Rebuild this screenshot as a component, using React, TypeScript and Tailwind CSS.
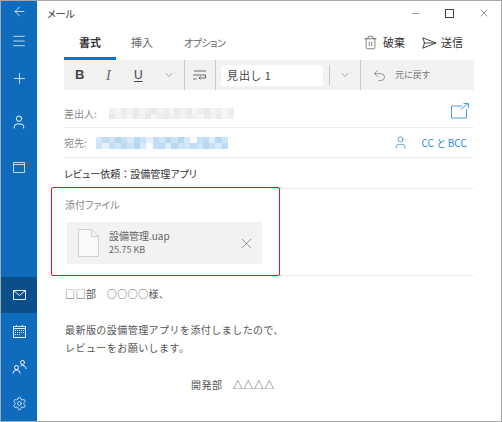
import { ChevronDown, Menu, Plus, User, Settings, Trash2, X, Minus, ArrowLeft, Undo2 } from "lucide-react";

const FONT = "font-['Noto_Sans_CJK_JP','Noto_Sans',sans-serif] [font-feature-settings:'palt']";

const FROM_BLUR = ["#f1f1f1", "#f6f6f6", "#ececec", "#f3f3f3", "#e9e9e9", "#f4f4f4", "#efefef", "#e8e8e8", "#f2f2f2", "#eeeeee", "#f6f6f6", "#ebebeb", "#f1f1f1", "#e9e9e9", "#f5f5f5", "#eeeeee", "#eaeaea", "#f3f3f3", "#efefef", "#f6f6f6", "#ededed"];
const TO_BLUR = ["#d3e7f8", "#bfdcf4", "#cfe5f7", "#b5d7f2", "#c6e0f5", "#d8eaf9", "#bbdaf3", "#cbe3f6", "#e6f1fb", "#c3def4", "#d1e6f7", "#b9d9f3", "#cde4f6", "#b5d7f2", "#d8eaf9", "#fafcfe", "#c6e0f5", "#bfdcf4", "#e0eefa", "#b9d9f3", "#cfe5f7"];

function BlurText({ colors, width, height }: { colors: string[]; width: number; height: number }) {
  // two rows of blocks, the second one shifted, like the mosaic over the address
  const shifted = [...colors.slice(7), ...colors.slice(0, 7)];
  return (
    <div className="flex flex-col" style={{ width, height }}>
      {[colors, shifted].map((row, r) => (
        <div key={r} className="flex flex-1">
          {row.map((c, i) => (
            <div key={i} className="flex-1" style={{ backgroundColor: c }} />
          ))}
        </div>
      ))}
    </div>
  );
}

function SideIcon({ children, active }: { children: React.ReactNode; active?: boolean }) {
  return (
    <div className={`flex h-[36px] w-full items-center justify-center text-white ${active ? "bg-[#0b4f8a]" : ""}`}>
      {children}
    </div>
  );
}

function Sidebar() {
  return (
    <div className="flex h-full w-[36px] shrink-0 flex-col bg-[#0f6cbd] text-white">
      <div className="flex flex-col">
        <div className="flex h-[20px] items-center justify-center">
          <ArrowLeft size={15} strokeWidth={1.2} />
        </div>
        <div className="flex h-[40px] items-center justify-center">
          <Menu size={16} strokeWidth={1.1} />
        </div>
        <div className="flex h-[34px] items-center justify-center">
          <Plus size={17} strokeWidth={1.1} />
        </div>
        <div className="flex h-[54px] items-center justify-center">
          <User size={16} strokeWidth={1.4} />
        </div>
        <div className="flex h-[36px] items-center justify-center">
          <svg width="12" height="11" viewBox="0 0 12 11" fill="none" stroke="currentColor" strokeOpacity="0.75">
            <path d="M.5.500h11v10H.5zM.5 2.500h11" />
          </svg>
        </div>
      </div>
      <div className="mt-auto flex flex-col">
        <SideIcon active>
          <svg width="13" height="10" viewBox="0 0 13 10" fill="none" stroke="currentColor" strokeOpacity="0.9">
            <path d="M.5.500h12v9H.5zM.5.500 6.500 5.500 12.500.500" />
          </svg>
        </SideIcon>
        <SideIcon>
          <svg width="13" height="13" viewBox="0 0 13 13" fill="none" stroke="currentColor" strokeOpacity="0.9">
            <rect x="0.500" y="1.500" width="12" height="11" />
            <line x1="0.500" y1="3.500" x2="12.500" y2="3.500" />
            <line x1="3.500" y1="0" x2="3.500" y2="2" />
            <line x1="9.500" y1="0" x2="9.500" y2="2" />
            <path d="M2 5.500h9M2 7.500h9M2 9.500h6" strokeDasharray="1 1" />
          </svg>
        </SideIcon>
        <SideIcon>
          <svg width="15" height="14" viewBox="0 0 15 14" fill="none" stroke="currentColor" strokeOpacity="0.95">
            <circle cx="4.500" cy="7.500" r="2" />
            <path d="M1 13.500c0-2.200 1.400-3.500 3.500-3.500S8 11.300 8 13.500" />
            <circle cx="10.500" cy="2.500" r="2" />
            <path d="M8.500 6.200c.6-.5 1.200-.7 2-.7 2.100 0 3.500 1.300 3.500 3.500" />
          </svg>
        </SideIcon>
        <SideIcon>
          <Settings size={15} strokeWidth={1.2} />
        </SideIcon>
      </div>
    </div>
  );
}

function TitleBar() {
  return (
    <div className="flex h-[26px] items-center pb-[2px] pl-[10px] text-[#333]">
      <span className="text-[10px]">メール</span>
      <div className="ml-auto flex items-center text-[#333]">
        <div className="flex w-[34px] justify-center">
          <Minus size={11} strokeWidth={1} />
        </div>
        <div className="flex w-[34px] justify-center">
          <div className="h-[9px] w-[9px] border border-[#444]" />
        </div>
        <div className="flex w-[35px] justify-center">
          <X size={12} strokeWidth={1} />
        </div>
      </div>
    </div>
  );
}

function TabsRow() {
  return (
    <div className="flex h-[33px] items-start text-[11px] text-[#666]">
      <div className="flex h-[33px] w-[52px] items-center justify-center border-b-[3px] border-[#0078d7] pt-[1px] font-bold text-[#333]">
        書式
      </div>
      <div className="ml-[15px] flex h-[33px] items-center pb-[2px]">挿入</div>
      <div className="ml-[31px] flex h-[33px] items-center pb-[2px] text-[10px] tracking-[-0.5px]">オプション</div>
      <div className="ml-auto mr-[11px] flex h-[33px] items-center pb-[2px] text-[#333]">
        <Trash2 size={15} strokeWidth={1} />
        <span className="ml-[5px]">破棄</span>
        <svg className="ml-[17px]" width="15" height="12" viewBox="0 0 15 12" fill="none" stroke="currentColor" strokeWidth="0.9">
          <path d="M.8.800 14 6 .8 11.200 2.500 6zM2.500 6H14" />
        </svg>
        <span className="ml-[4px]">送信</span>
      </div>
    </div>
  );
}

function Sep({ className = "" }: { className?: string }) {
  return <div className={`h-full w-[1px] bg-[#c8c8c8] ${className}`} />;
}

function Toolbar() {
  return (
    <div className="flex h-[30px] items-center bg-[#f2f2f2] text-[#444]">
      <span className="ml-[11px] w-[12px] font-['Liberation_Sans'] text-[13px] font-bold">B</span>
      <span className="ml-[19px] w-[10px] font-['Liberation_Serif'] text-[14px] italic text-[#666]">I</span>
      <span className="ml-[18px] w-[12px] font-['Liberation_Sans'] text-[12px] underline underline-offset-2">U</span>
      <ChevronDown className="ml-[17px] text-[#555]" size={12} strokeWidth={1} />
      <Sep className="ml-[9px]" />
      <svg className="ml-[7px]" width="15" height="11" viewBox="0 0 15 11" fill="none" stroke="#555" strokeWidth="0.9">
        <path d="M2 1h12M1 5h12.500v3H7M8.500 6.500 7 8l1.500 1.500M1 9h3.500" />
      </svg>
      <Sep className="ml-[8px]" />
      <div className="ml-[5px] flex h-[21px] w-[102px] items-center bg-white pl-[6px] text-[11px] tracking-[1px] text-[#444]">見出し 1</div>
      <div className="ml-[6px] h-[20px] w-[1px] bg-[#c8c8c8]" />
      <ChevronDown className="ml-[9px] text-[#555]" size={12} strokeWidth={1} />
      <Sep className="ml-[9px]" />
      <Undo2 className="ml-[11px] text-[#555]" size={15} strokeWidth={0.9} />
      <span className="ml-[8px] w-[36px] text-[9px] text-[#777]">元に戻す</span>
      <ChevronDown className="ml-[19px] text-[#ddd]" size={12} strokeWidth={1} />
    </div>
  );
}

function Attachment() {
  return (
    <div className="relative h-[88px] border-y border-[#eeeeee]">
      {/* annotation frame */}
      <div className="absolute -top-[2px] left-[-13px] h-[89px] w-[229px] rounded-[2px] border border-[#f01020]" />
      <div className="pl-[1px] pt-[8px] text-[10px] text-[#8a8a8a]">添付ファイル</div>
      <div className="ml-[3px] mt-[10px] flex h-[42px] w-[195px] items-center bg-[#f2f2f2]">
        <svg className="ml-[11px]" width="21" height="28" viewBox="0 0 21 28" fill="#fafafa" stroke="#cfcfcf">
          <path d="M.5.500h13l7 7v20H.5zM13.500.500v7h7" />
        </svg>
        <div className="ml-[10px] flex flex-col text-[#666]">
          <span className="text-[10px] leading-[14px]">設備管理.uap</span>
          <span className="text-[9px] leading-[14px]">25.75 KB</span>
        </div>
        <X className="ml-auto mr-[7px] text-[#666]" size={17} strokeWidth={0.9} />
      </div>
    </div>
  );
}

function Body() {
  return (
    <div className="pl-[1px] pt-[9px] text-[10px] leading-[18px] tracking-[0.45px] text-[#555] [font-feature-settings:normal]">
      <p>□□部　○○○○様、</p>
      <p className="mt-[18px]">最新版の設備管理アプリを添付しましたので、</p>
      <p>レビューをお願いします。</p>
      <p className="ml-[126px] mt-[19px]">開発部　△△△△</p>
    </div>
  );
}

export default function App() {
  return (
    <div className={`flex h-[422px] w-[502px] overflow-hidden border border-[#a8a8a8] bg-white ${FONT}`}>
      <Sidebar />
      <div className="flex min-w-0 flex-1 flex-col">
        <TitleBar />
        <div className="ml-[27px] w-[410px]">
          <TabsRow />
          <Toolbar />
          <div className="flex h-[38px] items-center border-b border-[#eeeeee] pt-[10px] text-[10px] text-[#8a8a8a]">
            <span className="w-[45px]">差出人:</span>
            <BlurText colors={FROM_BLUR} width={125} height={11} />
            <svg className="ml-auto mb-[6px] mr-[5px]" width="18" height="16" viewBox="0 0 18 16" fill="none" stroke="#4a9fe0">
              <path d="M11 3H.5v12h15V6M10 6l7-5M12.500.500H17.500V5" />
            </svg>
          </div>
          <div className="flex h-[30px] items-center border-b border-[#eeeeee] text-[10px] text-[#8a8a8a]">
            <span className="w-[32px]">宛先:</span>
            <BlurText colors={TO_BLUR} width={132} height={12} />
            <User className="ml-auto text-[#2b8ae0]" size={15} strokeWidth={1.2} />
            <span className="ml-[13px] mr-[7px] text-[10px] tracking-[0.1px] text-[#2b8ae0]">CC と BCC</span>
          </div>
          <div className="flex h-[30px] items-center text-[10px] text-[#333]">
            レビュー依頼<span className="[font-feature-settings:normal]">：</span>設備管理アプリ
          </div>
          <Attachment />
          <Body />
        </div>
      </div>
    </div>
  );
}
